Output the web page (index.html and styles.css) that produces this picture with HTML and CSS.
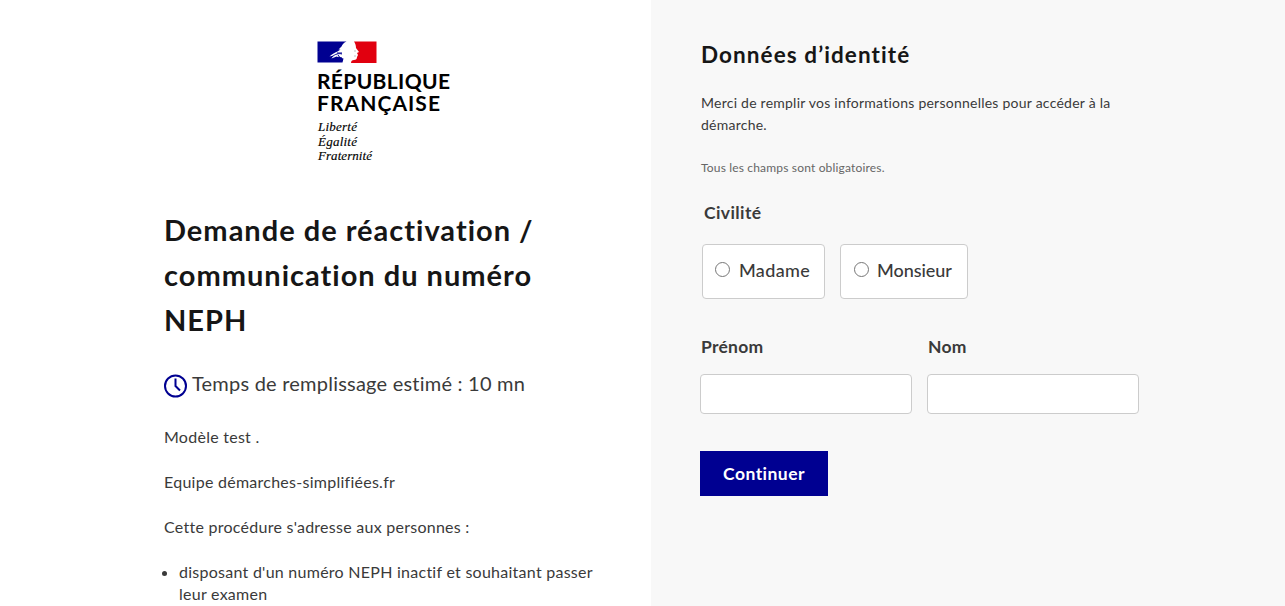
FILE: index.html
```html
<!DOCTYPE html>
<html lang="fr">
<head>
<meta charset="utf-8">
<title>Données d’identité</title>
<link rel="stylesheet" href="styles.css">
</head>
<body>
<div class="page">
  <main class="procedure">
    <svg class="logo" width="140" height="126" viewBox="0 0 140 126" role="img" aria-label="République Française">
      <path fill="#000091" d="M.5 1.500h29c-3 1-4 3-5 5l-3 3 2 0-3 2c-3 1-6 3-8 5l4-1-2 3 5-2 3 1 4 1-1 4H.5z"/>
      <path fill="#e1000f" d="M37 1.500h22.500V23H34c0-2 1-3 3-3 2 0 3-1 3-3l1-2-1-2 2-1-3-4c0-3-1-5-2-6.500z"/>
      <path fill="none" stroke="#000091" stroke-width="1" d="M15 17c3-3 7-4 10-3M17 19c3-2 6-2 8-1M21 15l3 4M20 13l5 0M18 20.500l7-1M24 22l2-2"/>
      <path fill="none" stroke="#999" stroke-width=".6" d="M37 11l2 0M37 16l2 0"/>
      <g class="logo-name">
        <text x="0" y="49" textLength="133">RÉPUBLIQUE</text>
        <text x="0" y="71" textLength="123">FRANÇAISE</text>
      </g>
      <g class="logo-motto">
        <text x="1" y="91" textLength="39">Liberté</text>
        <text x="1" y="105.500" textLength="39">Égalité</text>
        <text x="1" y="120" textLength="54">Fraternité</text>
      </g>
    </svg>
    <h1 class="title">Demande de réactivation /<br>communication du numéro<br>NEPH</h1>
    <p class="duration">
      <svg class="clock" width="24" height="24" viewBox="0 0 24 24" fill="none" stroke="#000091" stroke-width="2"><circle cx="11.500" cy="12" r="10.500"/><path d="M11.500 4.500v7.500l4.500 4.500"/></svg>
      <span>Temps de remplissage estimé : 10 mn</span>
    </p>
    <div class="description">
      <p>Modèle test .</p>
      <p>Equipe démarches-simplifiées.fr</p>
      <p>Cette procédure s'adresse aux personnes :</p>
      <ul><li>disposant d'un numéro NEPH inactif et souhaitant passer leur examen</li></ul>
    </div>
  </main>
  <form class="identity">
    <h2 class="heading">Données d’identité</h2>
    <p class="intro">Merci de remplir vos informations personnelles pour accéder à la démarche.</p>
    <p class="notice">Tous les champs sont obligatoires.</p>
    <div class="legend">Civilité</div>
    <div class="choices">
      <label class="choice madame"><input type="radio" name="civilite"><span>Madame</span></label>
      <label class="choice monsieur"><input type="radio" name="civilite"><span>Monsieur</span></label>
    </div>
    <div class="fields">
      <label class="field"><span>Prénom</span><input type="text"></label>
      <label class="field"><span>Nom</span><input type="text"></label>
    </div>
    <button class="submit" type="button">Continuer</button>
  </form>
</div>
</body>
</html>
```

FILE: styles.css
```css
* { box-sizing: border-box; }
body { margin: 0; font-family: Lato, "Noto Sans", sans-serif; color: #3a3a3a; overflow: hidden; font-variant-ligatures: none; }
h1, h2, p, ul { margin: 0; }
.page { display: grid; grid-template-columns: 651px 1fr; height: 606px; overflow: hidden; }
.procedure { padding: 40px 50px 0 164px; }
.logo { display: block; margin-left: 153px; }
.logo-name { font-size: 21px; font-weight: 700; fill: #000; }
.logo-motto { font-family: "Liberation Serif", serif; font-style: italic; font-size: 13px; fill: #000; stroke: #000; stroke-width: .15px; }
.title { margin-top: 41px; font-size: 29px; line-height: 45px; font-weight: 700; color: #161616; white-space: nowrap; letter-spacing: 1px; }
.duration { display: flex; align-items: center; gap: 4px; height: 30px; margin-top: 28px; font-size: 20px; letter-spacing: .22px; white-space: nowrap; }
.clock { margin-top: 1px; }
.duration span { padding-bottom: 4px; }
.description { margin-top: 26px; font-size: 16px; line-height: 22px; letter-spacing: .26px; }
.description p { margin-bottom: 23px; }
.description ul { padding-left: 15px; }
.identity { padding: 38px 50px 0 49px; background: #f8f8f8; }
.heading { font-size: 22.500px; line-height: 34px; font-weight: 700; color: #161616; letter-spacing: 1.080px; padding-left: 1px; }
.intro { width: 430px; margin-top: 20px; padding-left: 1px; font-size: 14px; line-height: 22px; letter-spacing: .24px; }
.notice { margin-top: 22px; padding-left: 1px; font-size: 12px; line-height: 20px; color: #666; letter-spacing: .17px; }
.legend { margin: 23px 0 0 4px; font-size: 17.500px; line-height: 24px; font-weight: 700; letter-spacing: .4px; }
.choices { display: flex; gap: 15px; margin: 19px 0 0 2px; }
.choice { display: flex; height: 55px; padding: 0 0 3px 12px; align-items: center; gap: 9px; background: #fff; border: 1px solid #ccc; border-radius: 4px; font-size: 18px; font-weight: 500; letter-spacing: .35px; }
.choice input { width: 15px; height: 15px; margin: 0 0 1px; }
.madame { width: 123px; }
.monsieur { width: 128px; padding-left: 13px; gap: 8px; letter-spacing: -.05px; }
.fields { display: flex; gap: 15px; margin-top: 36px; }
.field { display: flex; flex-direction: column; width: 212px; gap: 15px; font-size: 17.500px; line-height: 24px; font-weight: 700; letter-spacing: .25px; }
.field span { padding-left: 1px; }
.field input { height: 40px; width: 212px; border: 1px solid #ccc; border-radius: 4px; background: #fff; padding: 10px; }
.submit { display: block; margin-top: 37px; width: 128px; height: 45px; border: 0; padding: 0; background: #000091; color: #fff; font: 700 17.500px Lato, "Noto Sans", sans-serif; letter-spacing: .45px; font-variant-ligatures: none; }
```
